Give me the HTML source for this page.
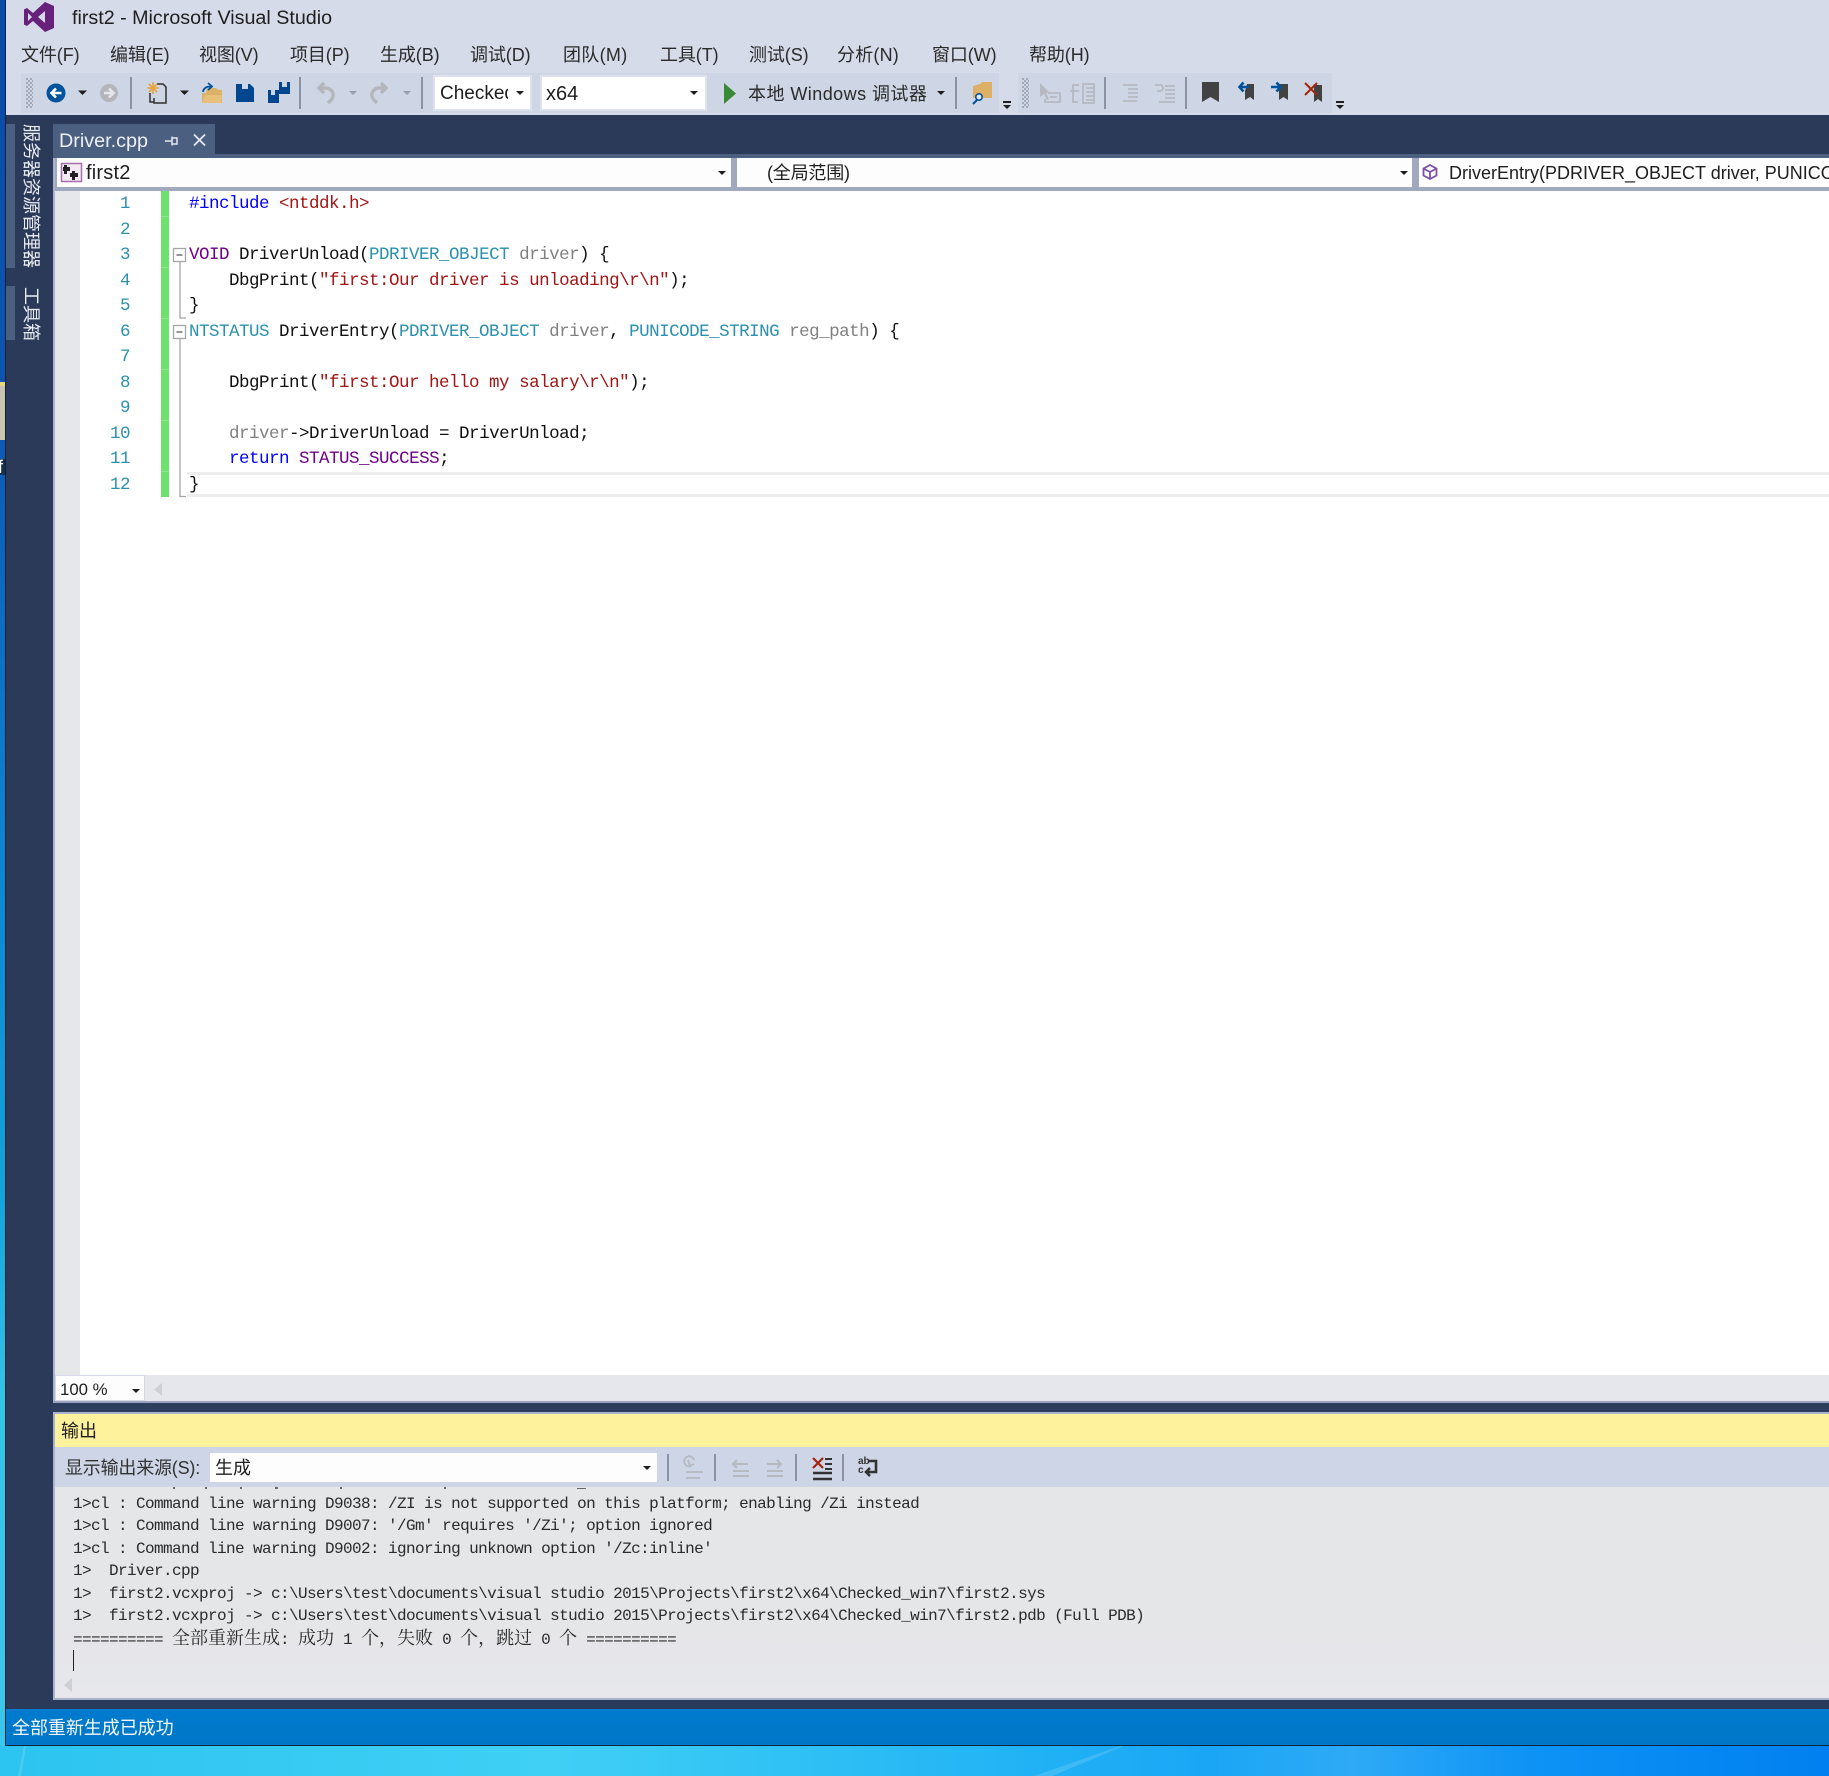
<!DOCTYPE html>
<html><head><meta charset="utf-8"><title>first2 - Microsoft Visual Studio</title>
<style>
html,body{margin:0;padding:0;background:#1aa8f0}
#p{position:relative;width:1829px;height:1776px;overflow:hidden;font-family:"Liberation Sans","Noto Sans CJK SC",sans-serif;color:#1e1e1e}
.b{position:absolute}
.t{position:absolute;white-space:nowrap;line-height:24px;height:24px;font-size:18px}
.m{color:#2a2a2a;letter-spacing:-.1px}
pre{margin:0;font-family:"Liberation Mono",monospace}
#code{position:absolute;left:189px;top:192px;font-size:17.5px;letter-spacing:-.5px;line-height:25.5px;color:#111}
#nums{position:absolute;left:90px;width:40px;top:192px;text-align:right;font-family:"Liberation Mono",monospace;font-size:17.5px;letter-spacing:-.5px;line-height:25.5px;color:#2b91af}
.k{color:#0000ff}.s{color:#a31515}.y{color:#2b91af}.g{color:#808080}.v{color:#6f008a}
.o{position:absolute;left:73px;height:22.5px;line-height:22.5px;white-space:pre;font-family:"Liberation Mono",monospace;font-size:16px;letter-spacing:-.6px;color:#2a2a2a}
.o span{font-family:"Noto Serif CJK SC",serif;font-size:18px;letter-spacing:0}
</style></head><body><div id="p">

<!-- desktop -->
<div class="b" style="left:0;top:0;width:6px;height:1776px;background:linear-gradient(180deg,#0a49a5 0,#0c56b2 400px,#0b80d0 800px,#12a4dc 1200px,#33c4e6 1400px,#3cc6ea 1700px,#30c8f0 1776px)"></div>
<div class="b" style="left:0;top:382px;width:5px;height:58px;background:#c9c3b0;border-top:4px solid #e8d880;box-sizing:border-box"></div>
<div class="b" style="left:0;top:459px;width:5px;height:16px;background:#14304e"></div>
<div class="t" style="left:-2px;top:455px;color:#fff;font-size:18px">f</div>
<div class="b" style="left:0;top:1746px;width:1829px;height:30px;background:linear-gradient(90deg,#2cc4f0 0,#40d0f5 30%,#22b4f5 55%,#1aa6f5 66%,#2eaaf6 74%,#0d92f5 84%,#0080f0 100%)"></div>
<svg class="b" style="left:0;top:1746px" width="1829" height="30" viewBox="0 0 1829 30"><path d="M1034 30L1120 0h4L1052 30z" fill="#fff" opacity=".14"/><path d="M18 30L24 0h2L21 30z" fill="#fff" opacity=".14"/></svg>

<!-- window -->
<div class="b" style="left:5px;top:0;width:1824px;height:1746px;background:#2b3a58"></div>
<div class="b" style="left:5px;top:0;width:1px;height:1746px;background:#14203a"></div>
<div class="b" style="left:6px;top:0;width:1823px;height:115px;background:#d6dbe9"></div>
<div class="t" style="left:72px;top:6px;font-size:19.7px">first2 - Microsoft Visual Studio</div>

<div class="t m" style="left:21px;top:42.5px">文件(F)</div>
<div class="t m" style="left:110px;top:42.5px">编辑(E)</div>
<div class="t m" style="left:199px;top:42.5px">视图(V)</div>
<div class="t m" style="left:290px;top:42.5px">项目(P)</div>
<div class="t m" style="left:380px;top:42.5px">生成(B)</div>
<div class="t m" style="left:470px;top:42.5px">调试(D)</div>
<div class="t m" style="left:563px;top:42.5px;letter-spacing:.3px">团队(M)</div>
<div class="t m" style="left:660px;top:42.5px">工具(T)</div>
<div class="t m" style="left:749px;top:42.5px">测试(S)</div>
<div class="t m" style="left:837px;top:42.5px;letter-spacing:.2px">分析(N)</div>
<div class="t m" style="left:932px;top:42.5px">窗口(W)</div>
<div class="t m" style="left:1029px;top:42.5px">帮助(H)</div>

<!-- toolbars -->
<div class="b" style="left:21px;top:73px;width:978px;height:40px;background:#ced5e5"></div>
<div class="b" style="left:1018px;top:73px;width:314px;height:40px;background:#ced5e5"></div>
<div class="b" style="left:435px;top:77px;width:95px;height:32px;background:#fff;box-shadow:0 0 0 2px #dde2ee"></div>
<div class="t" style="left:440px;top:81.5px;width:68px;overflow:hidden;font-size:19px">Checked</div>
<div class="b" style="left:542px;top:77px;width:163px;height:32px;background:#fff;box-shadow:0 0 0 2px #dde2ee"></div>
<div class="t" style="left:546px;top:81.5px;font-size:20px">x64</div>
<div class="t m" style="left:748px;top:81.5px;letter-spacing:.45px">本地 Windows 调试器</div>

<!-- main -->
<div class="b" style="left:6px;top:124px;width:9px;height:144px;background:#4b5f81"></div>
<div class="b" style="left:6px;top:286px;width:9px;height:54px;background:#4b5f81"></div>
<div class="b" style="left:19px;top:124px;width:24px;height:146px;writing-mode:vertical-rl;text-orientation:sideways;font-size:18px;line-height:24px;color:#e8ebf2;white-space:nowrap">服务器资源管理器</div>
<div class="b" style="left:19px;top:287px;width:24px;height:56px;writing-mode:vertical-rl;text-orientation:sideways;font-size:18px;line-height:24px;color:#e8ebf2;white-space:nowrap">工具箱</div>

<div class="b" style="left:53px;top:124px;width:162px;height:30px;background:#4b5f81"></div>
<div class="t" style="left:59px;top:129px;font-size:19.8px;color:#eef0f5">Driver.cpp</div>
<div class="b" style="left:53px;top:154px;width:1776px;height:4px;background:#4b5f81"></div>
<div class="b" style="left:53px;top:158px;width:1776px;height:33px;background:#a0a9bd"></div>
<div class="b" style="left:57px;top:158px;width:674px;height:29px;background:#fdfdfd"></div>
<div class="b" style="left:737px;top:158px;width:675px;height:29px;background:#fdfdfd"></div>
<div class="b" style="left:1419px;top:158px;width:410px;height:29px;background:#fdfdfd"></div>
<div class="t" style="left:86px;top:161px;font-size:20px;letter-spacing:.2px">first2</div>
<div class="t" style="left:767px;top:161px;letter-spacing:-.2px">(全局范围)</div>
<div class="t" style="left:1449px;top:161px;width:380px;overflow:hidden">DriverEntry(PDRIVER_OBJECT driver, PUNICODE_STRING reg_path)</div>

<!-- editor -->
<div class="b" style="left:53px;top:158px;width:2px;height:1245px;background:#a9b3cc"></div>
<div class="b" style="left:55px;top:191px;width:1774px;height:1184px;background:#fff"></div>
<div class="b" style="left:55px;top:191px;width:25px;height:1184px;background:#e6e7e8"></div>
<div class="b" style="left:161px;top:191px;width:8px;height:306px;background:#6de26d"></div>
<div class="b" style="left:187px;top:472px;width:1642px;height:25px;box-sizing:border-box;border-top:3px solid #eeeeee;border-bottom:3px solid #eeeeee"></div>
<pre id="nums">1
2
3
4
5
6
7
8
9
10
11
12</pre>
<pre id="code"><span class="k">#include</span> <span class="s">&lt;ntddk.h&gt;</span>

<span class="v">VOID</span> DriverUnload(<span class="y">PDRIVER_OBJECT</span> <span class="g">driver</span>) {
    DbgPrint(<span class="s">"first:Our driver is unloading\r\n"</span>);
}
<span class="y">NTSTATUS</span> DriverEntry(<span class="y">PDRIVER_OBJECT</span> <span class="g">driver</span>, <span class="y">PUNICODE_STRING</span> <span class="g">reg_path</span>) {

    DbgPrint(<span class="s">"first:Our hello my salary\r\n"</span>);

    <span class="g">driver</span>-&gt;DriverUnload = DriverUnload;
    <span class="k">return</span> <span class="v">STATUS_SUCCESS</span>;
}</pre>

<!-- zoom bar -->
<div class="b" style="left:55px;top:1375px;width:1774px;height:26px;background:#e6e7ec"></div>
<div class="b" style="left:56px;top:1376px;width:88px;height:24px;background:#fdfdfd;box-shadow:0 0 0 1px #d5d9e8"></div>
<div class="t" style="left:60px;top:1378px;font-size:16.8px">100 %</div>
<div class="b" style="left:53px;top:1401px;width:1776px;height:2px;background:#9aa3c0"></div>
<div class="b" style="left:53px;top:1403px;width:1776px;height:9px;background:#2d3e5c"></div>

<!-- output -->
<div class="b" style="left:53px;top:1412px;width:1776px;height:288px;background:#a9b3cc"></div>
<div class="b" style="left:55px;top:1414px;width:1774px;height:33px;background:#fff29d"></div>
<div class="t" style="left:61px;top:1419px">输出</div>
<div class="b" style="left:55px;top:1447px;width:1774px;height:40px;background:#cdd5e6"></div>
<div class="t" style="left:65px;top:1456px;color:#333;letter-spacing:-.2px">显示输出来源(S):</div>
<div class="b" style="left:210px;top:1453px;width:447px;height:29px;background:#fdfdfd"></div>
<div class="t" style="left:215px;top:1456px">生成</div>
<div class="b" style="left:55px;top:1487px;width:1774px;height:211px;background:linear-gradient(180deg,#e5e6e8 0,#e5e6e8 60%,#e7e7ec 100%)"></div>
<div class="o" style="top:1492.5px">1&gt;cl : Command line warning D9038: /ZI is not supported on this platform; enabling /Zi instead</div>
<div class="o" style="top:1514.5px">1&gt;cl : Command line warning D9007: '/Gm' requires '/Zi'; option ignored</div>
<div class="o" style="top:1537.5px">1&gt;cl : Command line warning D9002: ignoring unknown option '/Zc:inline'</div>
<div class="o" style="top:1559.5px">1&gt;  Driver.cpp</div>
<div class="o" style="top:1582.5px">1&gt;  first2.vcxproj -&gt; c:\Users\test\documents\visual studio 2015\Projects\first2\x64\Checked_win7\first2.sys</div>
<div class="o" style="top:1604.5px">1&gt;  first2.vcxproj -&gt; c:\Users\test\documents\visual studio 2015\Projects\first2\x64\Checked_win7\first2.pdb (Full PDB)</div>
<div class="o" style="top:1625.5px">========== <span>全部重新生成</span>: <span>成功</span> 1 <span>个，失败</span> 0 <span>个，跳过</span> 0 <span>个</span> ==========</div>
<div class="b" style="left:73px;top:1650px;width:1px;height:21px;background:#222"></div>

<!-- status -->
<div class="b" style="left:6px;top:1709px;width:1823px;height:36px;background:linear-gradient(180deg,#007bcf,#0076c6)"></div>
<div class="b" style="left:5px;top:1745px;width:1824px;height:1px;background:#06253f"></div>
<div class="t" style="left:12px;top:1716px;color:#f4f8fc;letter-spacing:-.05px">全部重新生成已成功</div>

<!-- icons -->
<svg class="b" style="left:0;top:0" width="1829" height="1776" viewBox="0 0 1829 1776" fill="none">
<!-- VS logo -->
<path fill="#68217a" fill-rule="evenodd" d="M45 2 L54 6 V28 L45 32 L33 21 L27 26 L24 24.5 V9.5 L27 8 L33 13 Z M45 11 L38 17 L45 23 Z M28 13 V21 L32 17 Z"/>
<!-- grips -->
<defs><pattern id="gr" width="4" height="4" patternUnits="userSpaceOnUse"><rect width="2" height="2" fill="#a2a8b6"/><rect x="2" y="2" width="2" height="2" fill="#a2a8b6"/></pattern></defs>
<rect x="26" y="78" width="7" height="30" fill="url(#gr)"/>
<rect x="1022" y="78" width="7" height="30" fill="url(#gr)"/>
<!-- back/forward -->
<circle cx="56" cy="93" r="9.5" fill="#00539c"/>
<path d="M61.5 93H52M56 88.5L51.5 93L56 97.5" stroke="#fff" stroke-width="2.6"/>
<circle cx="109" cy="93" r="9" fill="#b4b6bb"/>
<path d="M104 93H113M109 88.5L113.5 93L109 97.5" stroke="#e4e6ec" stroke-width="2.6"/>
<g fill="#1e1e1e">
<path d="M78 90.5h9l-4.500 4.500z"/><path d="M180 90.500h9l-4.500 4.500z"/>
<path d="M516 91h8l-4 4z"/><path d="M690 91h8l-4 4z"/><path d="M937 91h8l-4 4z"/>
<path d="M718 171h8l-4 4z"/><path d="M1400 171h8l-4 4z"/>
<path d="M132 1389h8l-4 4z"/><path d="M643 1466h8l-4 4z"/>
<path d="M1003 101h8v2h-8zM1003 105h8l-4 4z"/><path d="M1336 101h8v2h-8zM1336 105h8l-4 4z"/>
</g>
<g fill="#9a9faa"><path d="M349 91h8l-4 4z"/><path d="M403 91h8l-4 4z"/></g>
<!-- separators -->
<g fill="#8a93a5">
<rect x="130" y="77" width="2" height="32"/><rect x="299" y="77" width="2" height="32"/><rect x="421" y="77" width="2" height="32"/><rect x="955" y="77" width="2" height="32"/><rect x="1104" y="77" width="2" height="32"/><rect x="1185" y="77" width="2" height="32"/>
<rect x="667" y="1454" width="2" height="27"/><rect x="714" y="1454" width="2" height="27"/><rect x="795" y="1454" width="2" height="27"/><rect x="842" y="1454" width="2" height="27"/>
</g>
<!-- new project -->
<path d="M157 84h6l3 3v16h-12v-5" stroke="#2e2e2e" stroke-width="1.500"/>
<path d="M150 93v9h4" stroke="#2e2e2e" stroke-width="1.500"/>
<path d="M153 82v12M147 88h12M149 84l8 8M157 84l-8 8" stroke="#e8a33d" stroke-width="1.600"/>
<!-- open -->
<path fill="#dcb067" d="M207 88h9l2 2h4v13h-20v-10h4z"/><path fill="#e8c07c" d="M202 103l3-8h17l-1 8z"/>
<path d="M203 92a6 6 0 0 1 8-5M208 83l4 3.500-4 3.500" stroke="#00539c" stroke-width="1.800"/>
<!-- save -->
<path fill="#00478f" d="M236 84h6v5h6v-5h2l4 4v14h-18z"/>
<path fill="#00478f" d="M279 82h3v5h5v-5h3v12h-11z"/>
<path fill="#00478f" d="M268 90h3v5h4v-5h4v13h-11z"/>
<!-- undo / redo -->
<path d="M319 88h7a7 7 0 0 1 5 12l-3 3M324 83l-5 5 5 5" stroke="#b4b6bb" stroke-width="3.400"/>
<path d="M386 88h-7a7 7 0 0 0-5 12l3 3M381 83l5 5-5 5" stroke="#b4b6bb" stroke-width="3.400"/>
<!-- play -->
<path fill="#388a34" d="M724 83l12 10.500-12 10.500z"/>
<!-- find folder -->
<path fill="#dcb067" d="M973 86l7-2 2-2h10v16h-19z"/>
<circle cx="979" cy="97" r="3.200" stroke="#00539c" stroke-width="1.600" fill="#e6eaf2"/><path d="M977 100l-4 4" stroke="#00539c" stroke-width="2"/>
<!-- disabled toolbar 2 -->
<path fill="#b6b9c0" d="M1040 83l9 9-3 1 3 6-2 1-3-6-4 3z"/>
<g stroke="#b6b9c0" stroke-width="1.800">
<path d="M1048 93h12v9h-15v-3M1050 97h7"/>
<path d="M1079 85h-6v17h5M1070 91h9M1083 84h11v19h-11zM1086 88h8M1086 92h8M1086 96h8M1086 100h8"/>
<path d="M1123 85h14M1128 89h10M1128 93h10M1128 97h10M1123 101h14"/>
<path d="M1155 85h5a3 3 0 0 1 0 6h-3M1165 86h10M1165 90h10M1165 94h10M1165 98h10M1159 102h16"/>
</g>
<!-- bookmarks -->
<path fill="#424242" d="M1202 82h17v20l-8.500-5-8.500 5z"/>
<path fill="#424242" d="M1247 84h7v16l-4-3-5 3v-9zM1279 84h9v16l-4.500-3-4.500 3v-8zM1314 85h8v17l-4-3-4 3z"/>
<path d="M1249 87h-9M1243.500 82.500l-4 4.500 4 4.500" stroke="#00539c" stroke-width="2.600"/>
<path d="M1271 87h9M1276.500 82.500l4 4.500-4 4.500" stroke="#00539c" stroke-width="2.600"/>
<path d="M1305 83l12 12M1317 83l-12 12" stroke="#a1260d" stroke-width="2"/>
<!-- first2 icon -->
<rect x="61.500" y="163.500" width="20" height="18" fill="#f4eaf4" stroke="#a86fae" stroke-width="1.500"/>
<path fill="#222" d="M64 165h3v2h3v4h-3v3h-3v-3h-1v-4h1zM72 171h3v2h3v4h-3v3h-3v-3h-2v-4h2z"/>
<!-- cube icon -->
<path d="M1430 165l6.500 3.500v7l-6.500 3.500-6.500-3.500v-7zM1423.500 168.500l6.500 3.500 6.500-3.500M1430 172v7" stroke="#7b4fa5" stroke-width="1.800"/>
<!-- tab pin & close -->
<path d="M165 141h7M172 136.500v9M172 138h5v6h-5" stroke="#e4e7ef" stroke-width="1.500"/>
<path d="M194 134.500l11 11M205 134.500l-11 11" stroke="#e4e7ef" stroke-width="1.800"/>
<!-- outline -->
<g stroke="#a5a5a5" stroke-width="1.300">
<rect x="173.500" y="248.500" width="12" height="13" fill="#fff"/><rect x="173.500" y="325.500" width="12" height="13" fill="#fff"/>
<path d="M176.500 255h6M176.500 332h6" stroke="#555"/>
<path d="M180 262v56h6M180 339v157.500h6"/>
</g>
<!-- green dividers -->
<path d="M161 216.500h8M161 267.500h8M161 318.500h8M161 369.500h8M161 420.500h8M161 471.500h8" stroke="#8ee88e" stroke-width="1"/>
<!-- scroll arrows -->
<path fill="#cfd0d6" d="M162 1383v13l-8-6.500z"/>
<path fill="#cfd0d6" d="M72 1678v14l-8-7z"/>
<!-- clipped line stubs -->
<g fill="#666"><rect x="173" y="1487" width="2" height="2"/><rect x="205" y="1487" width="2" height="2"/><rect x="240" y="1487" width="2" height="2"/><rect x="275" y="1487" width="3" height="2"/><rect x="340" y="1487" width="2" height="2"/><rect x="444" y="1487" width="2" height="2"/><rect x="577" y="1488" width="9" height="1"/></g>
<!-- output toolbar -->
<g stroke="#b6b9c0" stroke-width="2">
<path d="M691 1466a5 5 0 1 1 3-6M688 1460l2 6 4-2M686 1472h17M686 1478h14" stroke-width="1.800"/>
<path d="M732 1464h16M737 1460l-4 4 4 4M733 1471h16M733 1476h16"/>
<path d="M767 1464h14M777 1460l4 4-4 4M767 1471h16M767 1476h16"/>
</g>
<path d="M813 1458l10 10M823 1458l-10 10" stroke="#a1260d" stroke-width="2.200"/>
<path d="M825 1459h7M825 1464h7M825 1469h7" stroke="#333" stroke-width="2"/>
<path d="M813 1473h19M813 1479h19" stroke="#333" stroke-width="2.400"/>
</svg>
<div class="t" style="left:858px;top:1457px;font-size:10px;line-height:10px;height:10px;font-weight:bold;color:#333">ab</div>
<div class="t" style="left:858px;top:1466px;font-size:10px;line-height:10px;height:10px;font-weight:bold;color:#333">c</div>
<svg class="b" style="left:860px;top:1456px" width="20" height="24" viewBox="0 0 20 24" fill="none"><path d="M9 5h7v11H6M10 12l-4 4 4 4" stroke="#333" stroke-width="2.600"/></svg>

</div></body></html>
